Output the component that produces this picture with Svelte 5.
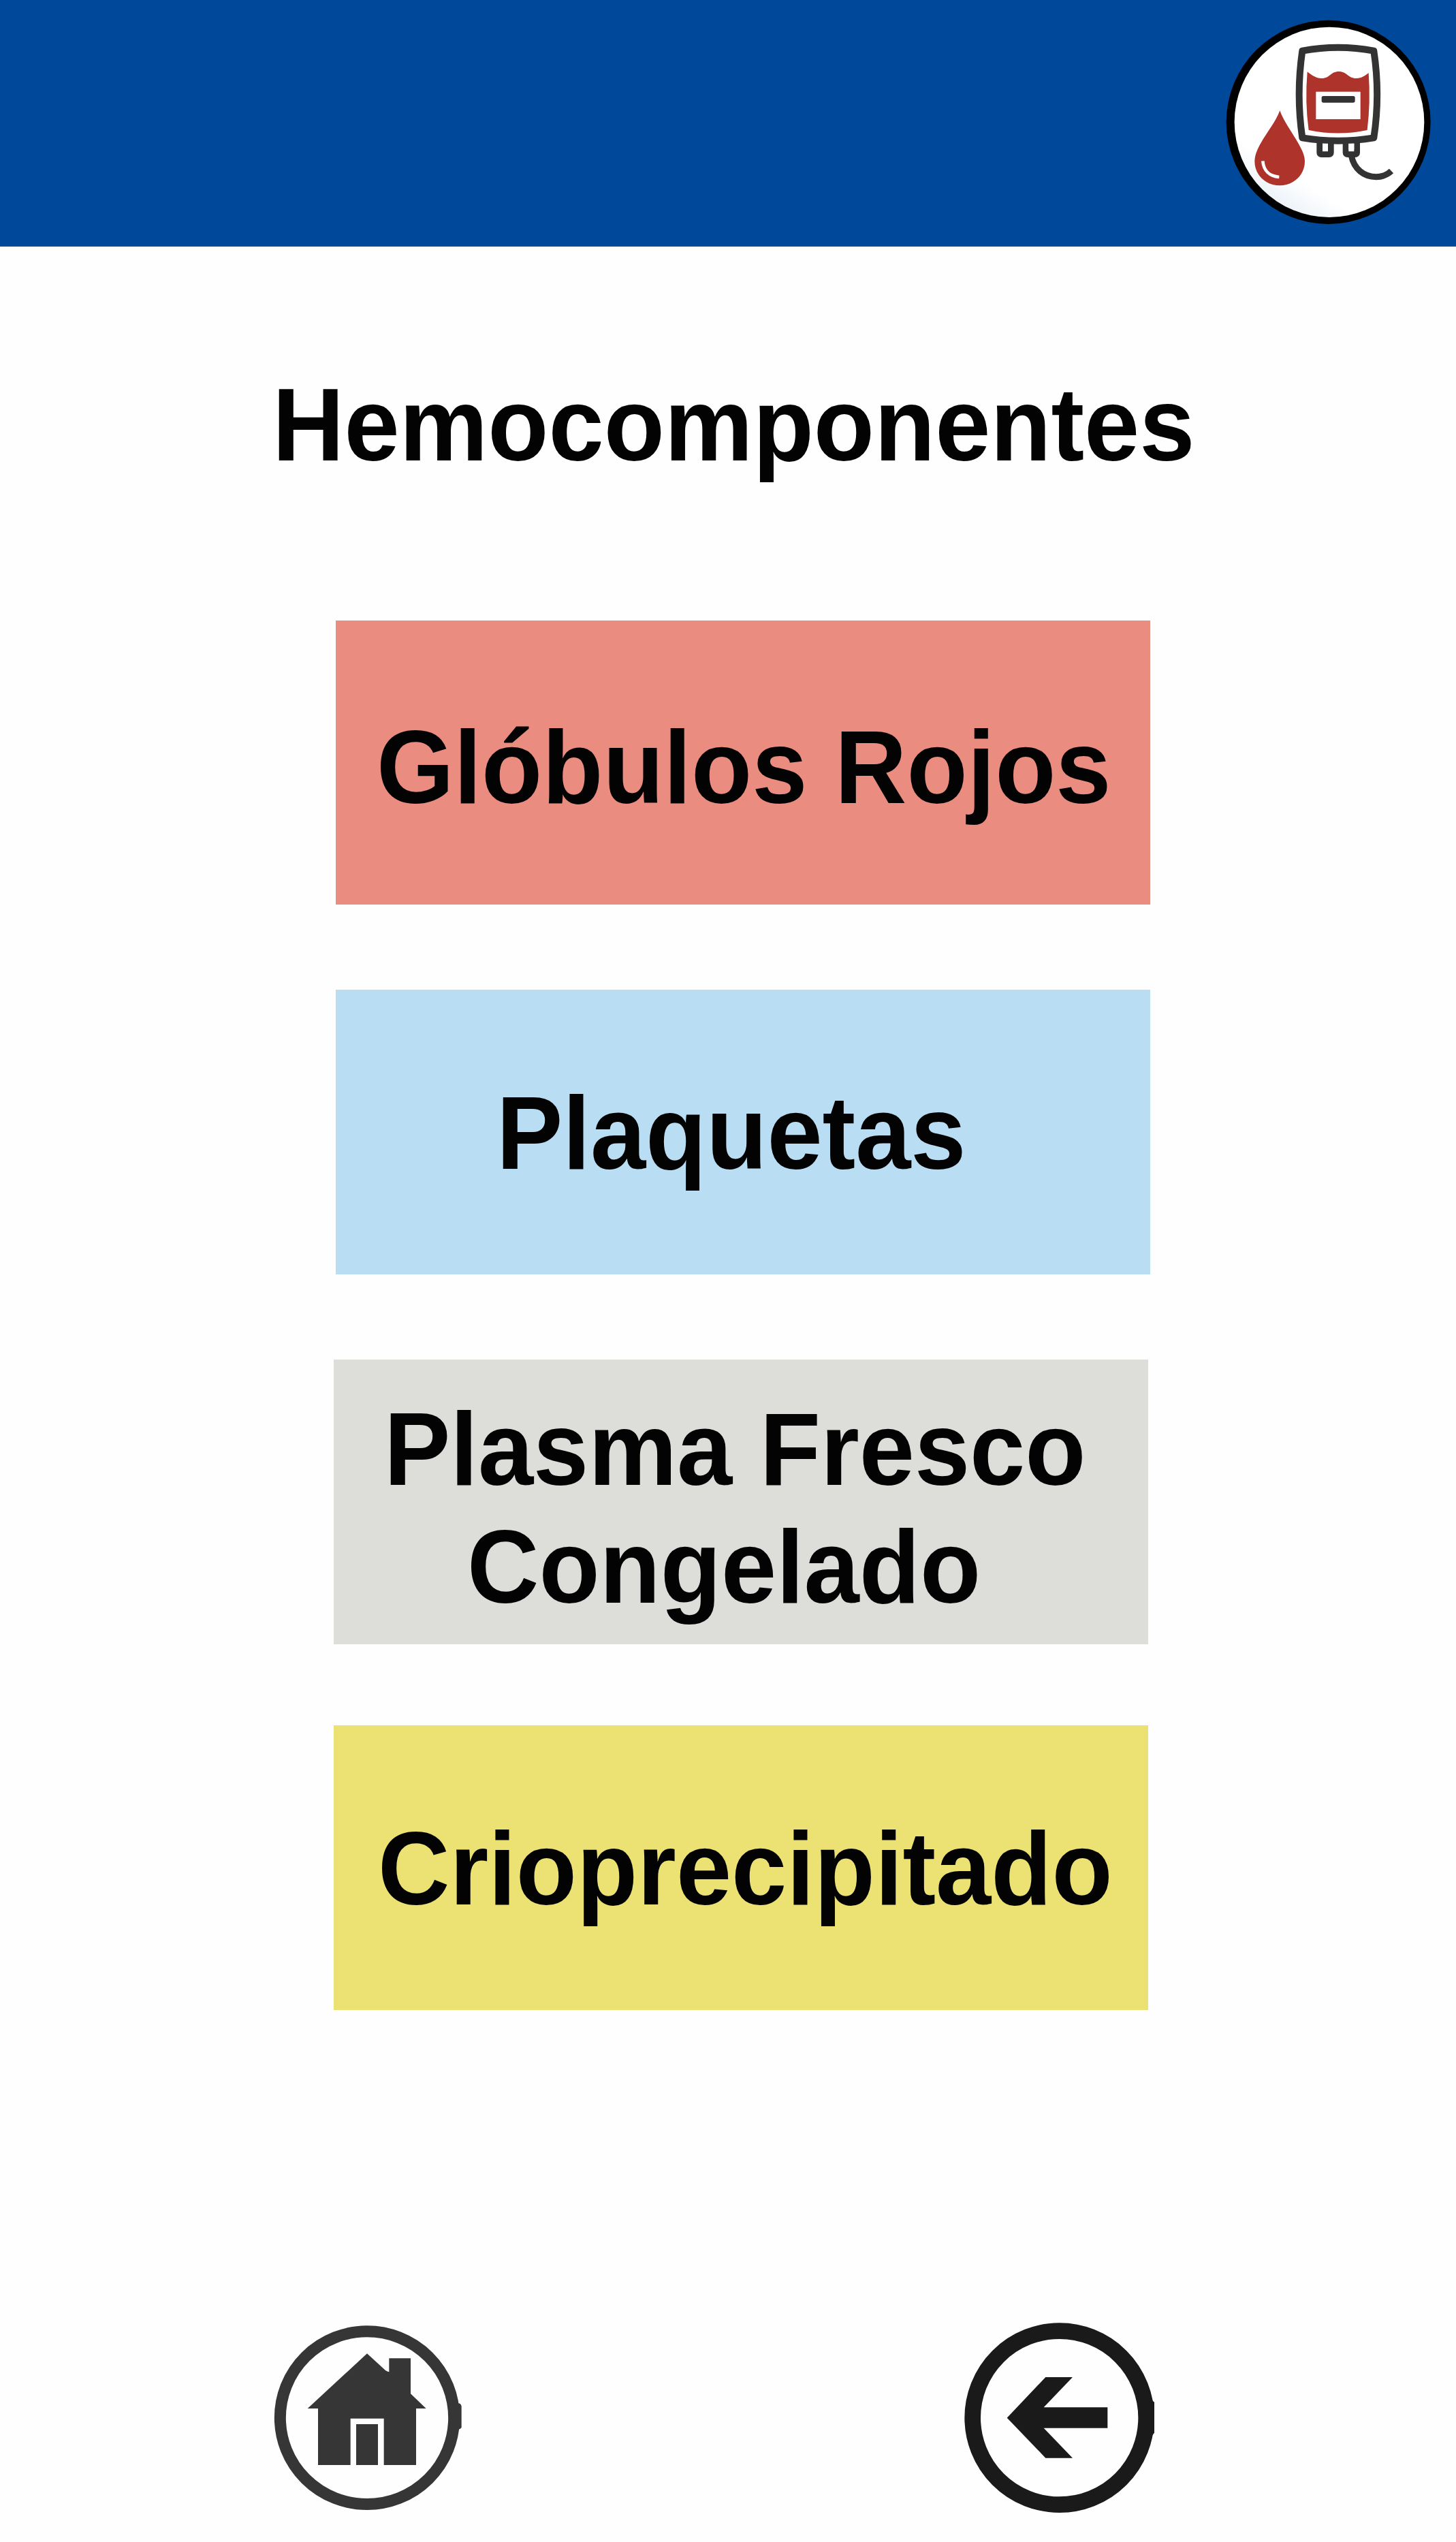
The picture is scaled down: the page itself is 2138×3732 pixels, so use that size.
<script>
  const components = [
    { id: 'globulos', lines: ['Glóbulos Rojos'] },
    { id: 'plaquetas', lines: ['Plaquetas'] },
    { id: 'plasma', lines: ['Plasma Fresco', 'Congelado'] },
    { id: 'crio', lines: ['Crioprecipitado'] }
  ];
</script>

<div class="page">
  <header>
    <svg class="badge" viewBox="0 0 1074 1086" role="img" aria-label="Banco de sangre">
      <defs>
        <linearGradient id="sheen" x1="0.15" y1="0.95" x2="0.5" y2="0.4">
          <stop offset="0" stop-color="#e6eef6" />
          <stop offset="0.35" stop-color="#ffffff" />
        </linearGradient>
      </defs>
      <ellipse cx="512" cy="538" rx="450" ry="449" fill="#000" />
      <ellipse cx="516" cy="538" rx="418" ry="419" fill="url(#sheen)" />
      <!-- blood bag -->
      <path
        d="M397 224Q555 195 712 224Q741 415 712 607Q555 633 397 607Q369 415 397 224Z"
        fill="#fff" stroke="#333" stroke-width="30" stroke-linejoin="round"
      />
      <path
        d="M419 316C440 332 457 345 482 345C520 345 520 315 558 315C594 315 598 345 634 345C660 345 674 332 689 321Q698 450 683 573Q555 600 425 573Q408 450 419 316Z"
        fill="#ad332b"
      />
      <rect x="457" y="404" width="196" height="121" fill="#fff" />
      <rect x="482" y="423" width="147" height="29" rx="7" fill="#333" />
      <path d="M473 620V672Q473 680 481 680H515Q523 680 523 672V620M588 620V672Q588 680 596 680H630Q638 680 638 672V620" fill="none" stroke="#333" stroke-width="26" />
      <path d="M486 632H510V658Q510 665 503 665H493Q486 665 486 658ZM601 632H625V658Q625 665 618 665H608Q601 665 601 658Z" fill="#fff" />
      <path d="M613 686C625 745 668 779 722 779C750 779 772 769 789 753" fill="none" stroke="#333" stroke-width="27" />
      <!-- drop -->
      <path
        d="M298 487C315 535 352 583 380 632C397 662 408 686 408 711C408 770 359 817 297 817C235 817 187 770 187 711C187 686 197 660 213 632C241 583 281 535 298 487Z"
        fill="#ad332b"
      />
      <path d="M223 709C226 750 252 776 295 780" fill="none" stroke="#fff" stroke-width="14" />
    </svg>
  </header>

  <main>
    <h1><span class="text">Hemocomponentes</span></h1>
    <nav class="list">
      {#each components as item (item.id)}
        <button class="card {item.id}">
          {#each item.lines as line}
            <span class="text">{line}</span>
          {/each}
        </button>
      {/each}
    </nav>
  </main>

  <footer>
    <button class="icon" aria-label="Inicio">
      <svg width="320" height="320" viewBox="0 0 960 960">
        <ellipse cx="477" cy="479" rx="383" ry="380.500" fill="none" stroke="#363636" stroke-width="51" />
        <path d="M878 415Q890 415 893 428V520Q890 530 878 530Z" fill="#363636" />
        <path
          d="M477 196L558 270Q566 276 574 277V217H669V373L737 438H693V687H551V482H404V687H261V438H215Z"
          fill="#363636"
        />
        <rect x="429" y="507" width="96" height="180" fill="#363636" />
      </svg>
    </button>
    <button class="icon" aria-label="Volver">
      <svg width="330" height="320" viewBox="0 0 990 960">
        <circle cx="497" cy="479" r="382.500" fill="none" stroke="#1a1a1a" stroke-width="71" />
        <path d="M905 402L915 410V545L905 558Z" fill="#1a1a1a" />
        <path d="M266 479L436 300H555L428 433H709V524H428L555 656H436Z" fill="#1a1a1a" />
      </svg>
    </button>
  </footer>
</div>

<style>
  :global(body) {
    margin: 0;
    background: #fefefe;
  }

  .page {
    display: flex;
    flex-direction: column;
    width: 2138px;
    height: 3732px;
    overflow: hidden;
    background: #fefefe;
    color: #030303;
    font-family: 'Liberation Sans', Arial, sans-serif;
  }

  header {
    display: flex;
    justify-content: flex-end;
    flex: none;
    height: 362px;
    background: #004899;
  }

  .badge {
    display: block;
    width: 358px;
    height: 362px;
  }

  main {
    flex: 1;
  }

  h1 {
    margin: 0;
    padding: 174px 0 0 400px;
    height: 375px;
  }

  .text {
    display: block;
    width: max-content;
    font-size: 153px;
    line-height: 173px;
    font-weight: 700;
    white-space: nowrap;
    transform: scaleX(0.954);
    transform-origin: 0 50%;
  }

  .list {
    display: grid;
    grid-template-rows: 417px 418px 418px 418px;
    row-gap: 125px;
    width: 1196px;
    margin-left: 490px;
  }

  .card {
    display: flex;
    flex-direction: column;
    justify-content: flex-start;
    align-items: flex-start;
    box-sizing: border-box;
    width: 1196px;
    border: 0;
    color: inherit;
    font-family: inherit;
    text-align: left;
  }

  .globulos {
    margin-left: 3px;
    padding: 128px 0 0 60px;
    background: #ea8c7f;
  }

  .plaquetas {
    margin-left: 3px;
    padding: 123px 0 0 236px;
    background: #b9ddf3;
  }

  .plasma {
    padding: 44px 0 0 74px;
    background: #dddeda;
  }

  .plasma .text + .text {
    margin-left: 122px;
  }

  .crio {
    margin-top: -6px;
    height: 418px;
    padding: 123px 0 0 65px;
    background: #ece274;
  }

  footer {
    display: flex;
    flex: none;
    gap: 690px;
    height: 342px;
    padding-left: 380px;
  }

  .icon {
    padding: 0;
    border: 0;
    background: none;
    height: 320px;
  }

  .icon svg {
    display: block;
  }
</style>
